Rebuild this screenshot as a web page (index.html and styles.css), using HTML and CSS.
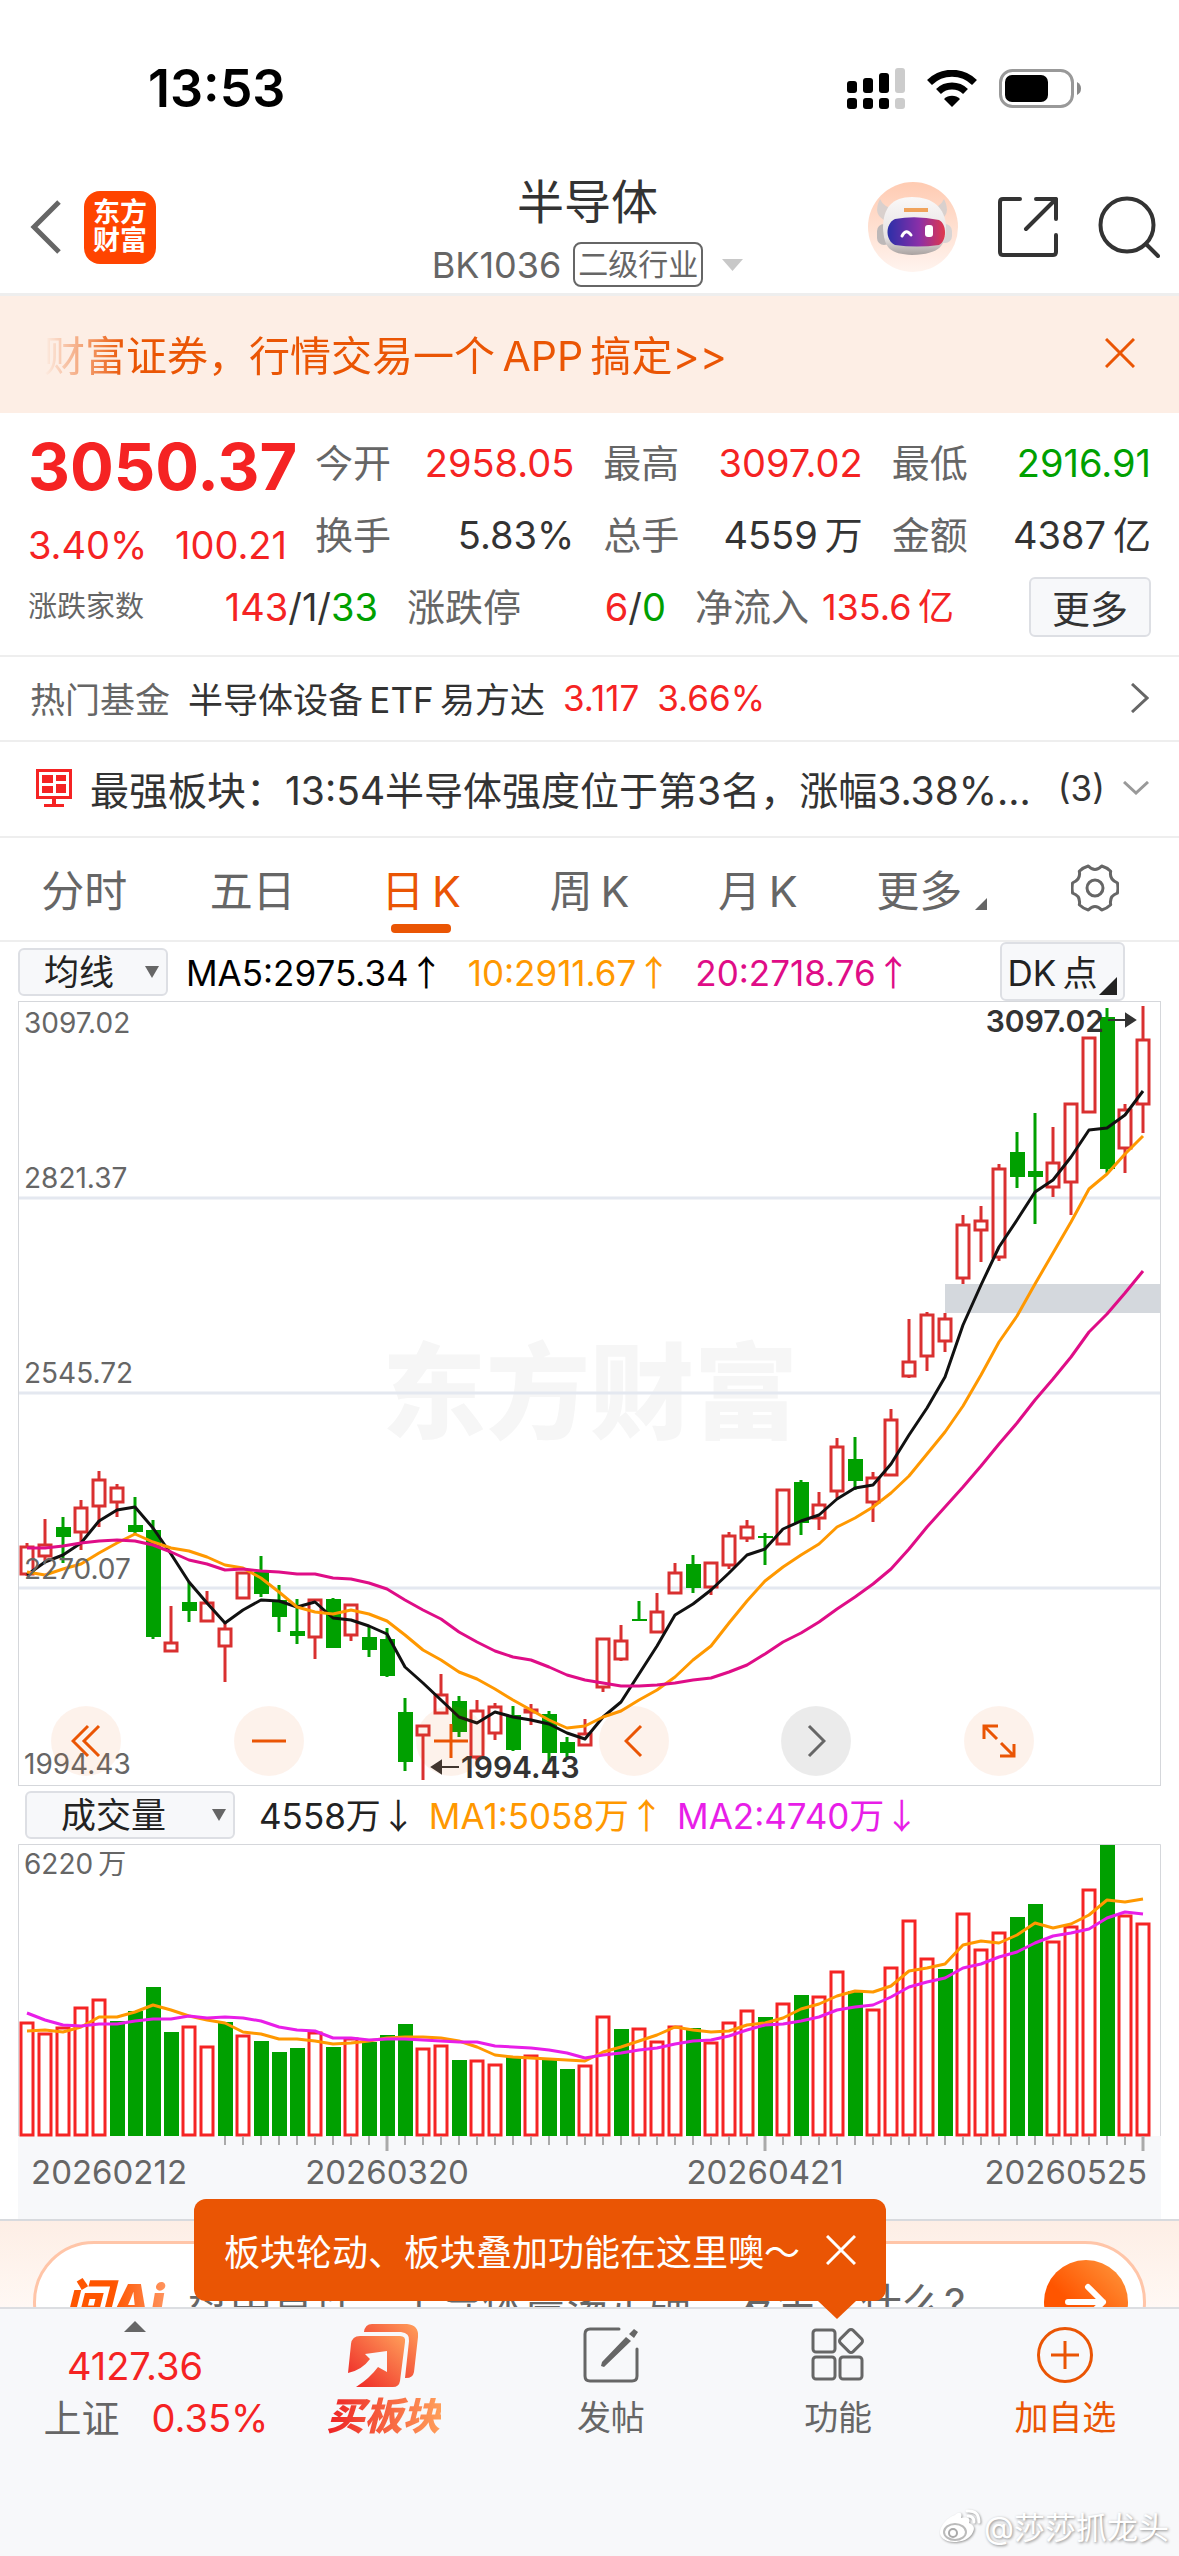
FILE: index.html
```html
<!DOCTYPE html>
<html lang="zh-CN">
<head>
    <meta charset="UTF-8">
    <meta name="viewport" content="width=device-width, initial-scale=1.0">
    <title>半导体 BK1036</title>
    <link rel="stylesheet" href="styles.css">
</head>
<body>
    <div class="status-bar">
        <span class="time">13:53</span>
        <div class="status-icons">
            <svg width="58" height="41" viewBox="0 0 58 41">
                <rect x="0" y="13" width="10" height="12" rx="3"/>
                <rect x="16" y="10" width="10" height="15" rx="3"/>
                <rect x="32" y="5" width="10" height="20" rx="3"/>
                <rect x="48" y="0" width="10" height="25" rx="3" fill="#ccc"/>
                <rect x="0" y="30" width="10" height="11" rx="3"/>
                <rect x="16" y="30" width="10" height="11" rx="3"/>
                <rect x="32" y="30" width="10" height="11" rx="3"/>
                <rect x="48" y="30" width="10" height="11" rx="3" fill="#ccc"/>
            </svg>
            <svg width="50" height="37" viewBox="0 0 50 37">
                <path d="M2.5 12.500a32 32 0 0 1 45 0" fill="none" stroke="#000" stroke-width="7"/>
                <path d="M11.500 21.500a19.500 19.500 0 0 1 27 0" fill="none" stroke="#000" stroke-width="7"/>
                <path d="M25 37l-8-8a11.500 11.500 0 0 1 16 0z"/>
            </svg>
            <svg width="83" height="39" viewBox="0 0 83 39">
                <rect x="1.5" y="1.5" width="72" height="36" rx="12" fill="none" stroke="#999" stroke-width="3"/>
                <rect x="6" y="6" width="43" height="27" rx="7"/>
                <path d="M78 13q4 2 4 6.500t-4 6.500z" fill="#888"/>
            </svg>
        </div>
    </div>

    <header class="header">
        <div class="header-side header-left">
            <button class="icon-btn" aria-label="返回">
                <svg width="32" height="54" viewBox="0 0 32 54" fill="none" stroke="#666" stroke-width="5"><path d="M29 2L4 27l25 25"/></svg>
            </button>
            <div class="logo">东方<br>财富</div>
        </div>
        <div class="header-title">
            <h1>半导体</h1>
            <div class="header-sub">
                <span>BK1036</span>
                <span class="tag">二级行业</span>
                <svg width="21" height="12" viewBox="0 0 21 12"><path d="M0 0h21L10.500 12z" fill="#c8c8c8"/></svg>
            </div>
        </div>
        <div class="header-side header-right">
            <button class="icon-btn" aria-label="智能助手">
                <svg width="90" height="90" viewBox="0 0 90 90">
                    <defs>
                        <linearGradient id="robotBg" x1="0" y1="0" x2="0" y2="1"><stop offset="0" stop-color="#ffcbb2"/><stop offset="1" stop-color="#fff4ef"/></linearGradient>
                        <linearGradient id="visor"><stop offset="0" stop-color="#2b2fa8"/><stop offset=".55" stop-color="#8a2fa8"/><stop offset="1" stop-color="#e0384c"/></linearGradient>
                        <linearGradient id="helmet" x1="0" y1="0" x2="0" y2="1"><stop offset="0" stop-color="#faf8f8"/><stop offset=".7" stop-color="#e6e2e2"/><stop offset="1" stop-color="#a9a2a0"/></linearGradient>
                    </defs>
                    <circle cx="45" cy="45" r="45" fill="url(#robotBg)"/>
                    <path d="M12 17q-8 16 6 22l8-13q-10 0-14-9zM76 17q8 16-6 22l-8-13q10 0 14-9z" fill="#d9d0cd"/>
                    <rect x="9" y="42" width="14" height="21" rx="7" fill="#bdb8b8"/>
                    <rect x="69" y="42" width="15" height="19" rx="7" fill="#d8d4d4"/>
                    <path d="M44 15c21 0 33 11 34 29 0 20-6 28-34 29-22-1-28-7-29-27 0-20 9-31 29-31z" fill="url(#helmet)"/>
                    <path d="M36 28h24" stroke="#f0a35c" stroke-width="4"/>
                    <path d="M27 37q21-4 44 1c8 4 8 21 0 25q-22 3-44 0c-10-5-10-21 0-26z" fill="url(#visor)"/>
                    <path d="M34 54q4-8 9-1" fill="none" stroke="#fff" stroke-width="3" stroke-linecap="round"/>
                    <rect x="57" y="43" width="8" height="12" rx="3" fill="#fff"/>
                </svg>
            </button>
            <button class="icon-btn" aria-label="分享">
                <svg width="60" height="60" viewBox="0 0 60 60" fill="none" stroke="#333" stroke-width="4" stroke-linecap="round" stroke-linejoin="round">
                    <path d="M22 2H5q-3 0-3 3v50q0 3 3 3h50q3 0 3-3V38M38 2h20v20M58 2L28 32"/>
                </svg>
            </button>
            <button class="icon-btn" aria-label="搜索">
                <svg width="62" height="62" viewBox="0 0 62 62" fill="none" stroke="#333" stroke-width="4" stroke-linecap="round">
                    <circle cx="29" cy="29" r="26.500"/><path d="M48 48l12 12"/>
                </svg>
            </button>
        </div>
    </header>

    <div class="banner">
        <a href="#" class="banner-text">财富证券，行情交易一个&thinsp;APP&thinsp;搞定&gt;&gt;</a>
        <button class="icon-btn" aria-label="关闭广告">
            <svg width="30" height="30" viewBox="0 0 30 30" fill="none" stroke="#ea5504" stroke-width="3"><path d="M1 1l28 28M29 1L1 29"/></svg>
        </button>
    </div>

    <section class="quote">
        <div class="quote-top">
            <div class="quote-price">
                <div class="price">3050.37</div>
                <div class="change"><span>3.40%</span><span>100.21</span></div>
            </div>
            <div class="quote-grid">
                <div class="pair"><span class="label">今开</span><span class="red">2958.05</span></div>
                <div class="pair"><span class="label">最高</span><span class="red">3097.02</span></div>
                <div class="pair"><span class="label">最低</span><span class="green">2916.91</span></div>
                <div class="pair"><span class="label">换手</span><span>5.83%</span></div>
                <div class="pair"><span class="label">总手</span><span>4559&thinsp;万</span></div>
                <div class="pair"><span class="label">金额</span><span>4387&thinsp;亿</span></div>
            </div>
        </div>
        <div class="quote-bottom">
            <div class="pair"><span class="label small">涨跌家数</span><span><b class="red">143</b>/1/<b class="green">33</b></span></div>
            <div class="pair"><span class="label">涨跌停</span><span><b class="red">6</b>/<b class="green">0</b></span></div>
            <div class="pair"><span class="label">净流入</span><span class="red inflow">135.6&thinsp;亿</span></div>
            <button class="more-btn">更多</button>
        </div>
    </section>

    <a href="#" class="fund-row">
        <span class="label">热门基金</span>
        <span class="fund-name">半导体设备&thinsp;ETF&thinsp;易方达</span>
        <span class="red">3.117</span>
        <span class="red">3.66%</span>
        <svg class="push" width="18" height="30" viewBox="0 0 18 30" fill="none" stroke="#666" stroke-width="3"><path d="M1 1l15 14L1 29"/></svg>
    </a>

    <div class="board-row">
        <svg width="36" height="38" viewBox="0 0 36 38" fill="#f52323">
            <path d="M1.500 1.500h33v27h-33z" fill="none" stroke="#f52323" stroke-width="3"/>
            <path d="M6 6h11v8H6zM20 6h10v6H20zM6 17h11v7H6zM20 15h10v9H20zM16 29h4v6h-4zM8 35h20v3H8z"/>
        </svg>
        <span class="board-text">最强板块：13:54半导体强度位于第3名，涨幅3.38%...</span>
        <span class="board-count">(3)</span>
        <svg width="26" height="14" viewBox="0 0 26 14" fill="none" stroke="#999" stroke-width="3"><path d="M1 1l12 11L25 1"/></svg>
    </div>

    <nav class="tabs">
        <button class="tab">分时</button>
        <button class="tab">五日</button>
        <button class="tab active">日&thinsp;K</button>
        <button class="tab">周&thinsp;K</button>
        <button class="tab">月&thinsp;K</button>
        <button class="tab tab-more">更多<svg class="corner" width="12" height="12" viewBox="0 0 12 12"><path d="M12 0v12H0z" fill="#666"/></svg></button>
        <button class="tab" aria-label="设置">
            <svg width="48" height="48" viewBox="0 0 48 48" fill="none" stroke="#666" stroke-width="3" stroke-linejoin="round">
                <path d="M46.400 18.800Q47.500 24 46.400 29.200Q38 32 39.700 40.800Q36 44.500 30.700 46Q24 39 17.300 46Q12 44.500 8.300 40.800Q10 32 1.600 29.200Q.5 24 1.600 18.800Q10 16 8.300 7.200Q12 3.500 17.300 2Q24 9 30.700 2Q36 3.500 39.700 7.200Q38 16 46.400 18.800z"/>
                <circle cx="24" cy="24" r="8"/>
            </svg>
        </button>
    </nav>

    <div class="indicator-row">
        <div class="select-box ma-select">
            <select aria-label="主图指标"><option>均线</option><option>BOLL</option></select>
        </div>
        <span class="ma5">MA5:2975.34<i>↑</i></span>
        <span class="ma10">10:2911.67<i>↑</i></span>
        <span class="ma20">20:2718.76<i>↑</i></span>
        <button class="dk-btn">DK&thinsp;点<svg width="18" height="18" viewBox="0 0 18 18"><path d="M18 0v18H0z" fill="#222"/></svg></button>
    </div>

    <div class="chart-wrap">
        <svg id="kline" class="chart" viewBox="0 0 1143 785"></svg>
        <div class="chart-tools">
            <button aria-label="最左"><svg width="30" height="34" viewBox="0 0 30 34"><path d="M17 2L2 17l15 15M28 2L13 17l15 15"/></svg></button>
            <button aria-label="缩小"><svg width="34" height="34" viewBox="0 0 34 34"><path d="M0 17h34"/></svg></button>
            <button aria-label="放大"><svg width="34" height="34" viewBox="0 0 34 34"><path d="M0 17h34M17 0v34"/></svg></button>
            <button aria-label="左移"><svg width="20" height="34" viewBox="0 0 20 34"><path d="M17 2L2 17l15 15"/></svg></button>
            <button aria-label="右移" class="disabled"><svg width="20" height="34" viewBox="0 0 20 34"><path d="M3 2l15 15L3 32"/></svg></button>
            <button aria-label="全屏"><svg width="36" height="36" viewBox="0 0 36 36"><path d="M3 16V3h14M3 3l13 13M33 21v12H19M33 33L20 20"/></svg></button>
        </div>
    </div>

    <div class="indicator-row volume-row">
        <div class="select-box vol-select">
            <select aria-label="副图指标"><option>成交量</option><option>MACD</option></select>
        </div>
        <span class="vol">4558万<i>↓</i></span>
        <span class="ma10">MA1:5058万<i>↑</i></span>
        <span class="vol-ma2">MA2:4740万<i>↓</i></span>
    </div>

    <div class="volume-wrap">
        <svg id="volume" class="chart" viewBox="0 0 1143 375"></svg>
    </div>

    <div class="ai-strip">
        <div class="ai-pill">
            <span class="ai-logo">问Ai</span>
            <span class="ai-text">盘中直连：半导体震荡走强，发生了什么?</span>
            <button class="ai-go" aria-label="提问">
                <svg width="42" height="38" viewBox="0 0 42 38" fill="none" stroke="#fff" stroke-width="6" stroke-linecap="round" stroke-linejoin="round"><path d="M3 19h35M23 4l15 15-15 15"/></svg>
            </button>
        </div>
    </div>

    <footer class="bottom-bar">
        <div class="tooltip">
            <span>板块轮动、板块叠加功能在这里噢～</span>
            <button class="icon-btn" aria-label="关闭提示">
                <svg width="30" height="30" viewBox="0 0 30 30" fill="none" stroke="#fff" stroke-width="3"><path d="M1 1l28 28M29 1L1 29"/></svg>
            </button>
        </div>
        <button class="index-box">
            <svg width="22" height="11" viewBox="0 0 22 11"><path d="M11 0l11 11H0z" fill="#666"/></svg>
            <span class="red">4127.36</span>
            <span class="index-line"><span>上证</span><span class="red">0.35%</span></span>
        </button>
        <button class="bar-item buy">
            <svg width="72" height="66" viewBox="0 0 72 66">
                <defs>
                    <linearGradient id="buy" x1="0" y1="1" x2="1" y2="0"><stop offset="0" stop-color="#ed2224"/><stop offset="1" stop-color="#ff9f5a"/></linearGradient>
                </defs>
                <path d="M16 9q1-8 8-8h35q12 1 11 13l-4 35q-1 6-8 6h-1l4-37q1-8-8-9z" fill="url(#buy)"/>
                <path d="M12 13h40q6 0 5 6l-5 39q-1 6-7 6H8q14-9 22-20l9 5V28l-22 3 5 5Q14 47 0 50l3-29q1-8 9-8z" fill="url(#buy)"/>
            </svg>
            <span>买板块</span>
        </button>
        <button class="bar-item">
            <svg width="56" height="56" viewBox="0 0 56 56" fill="none" stroke="#666" stroke-width="3">
                <path d="M36 2H7Q2 2 2 7v42q0 5 5 5h42q5 0 5-5V22" stroke-linecap="round"/>
                <path d="M43 10l5 4-27 26-3-1 1-4zM46 7l5-5 4 3-4 6z" fill="#666" stroke="none"/>
            </svg>
            <span>发帖</span>
        </button>
        <button class="bar-item">
            <svg width="56" height="56" viewBox="0 0 56 56" fill="none" stroke="#666" stroke-width="3">
                <rect x="3" y="3" width="22" height="22" rx="3"/>
                <rect x="3" y="30" width="22" height="22" rx="3"/>
                <rect x="30" y="30" width="22" height="22" rx="3"/>
                <rect x="32" y="5" width="18" height="18" rx="3" transform="rotate(45 41 14)"/>
            </svg>
            <span>功能</span>
        </button>
        <button class="bar-item add">
            <svg width="56" height="56" viewBox="0 0 56 56" fill="none" stroke="#ea5504" stroke-width="3">
                <circle cx="28" cy="28" r="26.500"/><path d="M14 28h28M28 14v28"/>
            </svg>
            <span>加自选</span>
        </button>
        <div class="watermark">
            <svg width="42" height="36" viewBox="0 0 42 36">
                <path d="M16 7c4-4 8-2 6 3 6-2 10 0 8 5 5 2 6 5 4 9-3 7-11 10-19 10C6 34 0 29 1 23 2 17 9 9 16 7z" fill="#fff"/>
                <ellipse cx="16" cy="24" rx="11" ry="8" fill="none" stroke="#bbb" stroke-width="2"/>
                <circle cx="14" cy="25" r="4" fill="none" stroke="#aaa" stroke-width="2"/>
                <path d="M29 8q6 0 6 6M28 3q12-1 12 11" fill="none" stroke="#fff" stroke-width="3" stroke-linecap="round"/>
            </svg>
            <span>@莎莎抓龙头</span>
        </div>
    </footer>

    <script src="script.js"></script>
</body>
</html>
```

FILE: styles.css
```css
* {
    box-sizing: border-box;
}
body {
    margin: 0;
    min-height: 100vh;
    display: flex;
    flex-direction: column;
    font-family: Inter, "Noto Sans CJK SC", sans-serif;
    color: #333;
    background: #fff;
}
button, select {
    font-family: inherit;
    color: inherit;
    border: none;
    background: none;
    padding: 0;
    cursor: pointer;
}
a {
    color: inherit;
    text-decoration: none;
}
svg {
    display: block;
    flex: none;
}
.red { color: #f52323; }
.green { color: #00a000; }
.label { color: #666; }
.icon-btn { flex: none; }

/* status bar */
.status-bar {
    height: 174px;
    padding: 2px 97px 0 148px;
    display: flex;
    align-items: center;
    justify-content: space-between;
}
.time {
    font-size: 52px;
    font-weight: 600;
    color: #000;
}
.status-icons {
    display: flex;
    align-items: center;
    gap: 22px;
}

/* header */
.header {
    display: grid;
    grid-template-columns: 1fr auto 1fr;
    padding: 0 19px 6px 15px;
    border-bottom: 3px solid #eee;
}
.header-side {
    height: 106px;
    display: flex;
    align-items: center;
    gap: 22px;
}
.header-left { padding-left: 15px; }
.header-right {
    justify-content: flex-end;
    gap: 40px;
}
.logo {
    width: 72px;
    height: 73px;
    padding: 8px 0;
    border-radius: 16px;
    background: #ff4400;
    color: #fff;
    font-size: 27px;
    font-weight: 700;
    line-height: 28px;
    text-align: center;
}
.header-title {
    text-align: center;
}
.header-title h1 {
    margin: 0 0 12px;
    font-size: 47px;
    font-weight: 400;
    line-height: 56px;
}
.header-sub {
    display: flex;
    align-items: center;
    height: 45px;
    font-size: 36px;
    color: #666;
}
.tag {
    margin: 0 19px 0 12px;
    padding: 0 3px;
    border: 2px solid #666;
    border-radius: 8px;
    font-size: 30px;
    line-height: 41px;
}

/* ad banner */
.banner {
    height: 117px;
    padding: 0 44px 4px;
    display: flex;
    align-items: center;
    justify-content: space-between;
    background: #fdeee5;
}
.banner-text {
    font-size: 41px;
    color: #ea5504;
    mask-image: linear-gradient(to right, transparent, #000 80px);
}

/* quote */
.quote {
    padding: 14px 28px 18px;
    font-size: 38px;
    border-bottom: 2px solid #eee;
}
.quote-top {
    display: flex;
    align-items: flex-start;
    gap: 22px;
    height: 150px;
}
.quote-price {
    width: 265px;
    color: #f52323;
}
.price {
    font-size: 65px;
    font-weight: 700;
    line-height: 80px;
}
.change {
    display: flex;
    justify-content: space-between;
    padding-right: 6px;
    line-height: 76px;
}
.quote-grid {
    flex: 1;
    display: grid;
    grid-template-columns: repeat(3, 1fr);
    column-gap: 29px;
    line-height: 72px;
}
.pair {
    display: flex;
    justify-content: space-between;
    white-space: nowrap;
}
.pair b {
    font-weight: 400;
}
.quote-bottom {
    display: grid;
    grid-template-columns: 350fr 259fr 259fr 168fr;
    gap: 29px;
    align-items: center;
    line-height: 60px;
}
.small { font-size: 29px; }
.inflow { font-size: 36px; }
.more-btn {
    justify-self: end;
    width: 122px;
    height: 60px;
    padding-bottom: 4px;
    border: 2px solid #dddfe4;
    border-radius: 6px;
    background: #f7f8fa;
    font-size: 38px;
}

/* fund and board rows */
.fund-row, .board-row {
    display: flex;
    align-items: center;
    padding: 0 30px 2px;
    border-bottom: 2px solid #eee;
    white-space: nowrap;
}
.fund-row {
    height: 85px;
    gap: 18px;
    font-size: 35px;
}
.push { margin-left: auto; }
.board-row {
    height: 96px;
    padding-left: 36px;
    font-size: 39px;
}
.board-text {
    flex: 1;
    margin-left: 18px;
    overflow: hidden;
}
.board-count {
    margin: 0 18px;
    font-size: 35px;
}

/* period tabs */
.tabs {
    height: 104px;
    display: grid;
    grid-template-columns: repeat(7, 1fr);
    border-bottom: 2px solid #eee;
}
.tab {
    position: relative;
    display: flex;
    align-items: center;
    justify-content: center;
    padding-bottom: 3px;
    font-size: 43px;
    color: #666;
}
.tab.active { color: #ea5504; }
.tab.active::after {
    content: "";
    position: absolute;
    bottom: 7px;
    width: 60px;
    height: 9px;
    border-radius: 4px;
    background: #ea5504;
}
.tab-more { padding-right: 14px; }
.corner {
    position: absolute;
    right: 24px;
    bottom: 30px;
}

/* indicator rows */
.indicator-row {
    height: 59px;
    padding: 0 54px 0 18px;
    display: flex;
    align-items: center;
    font-size: 35px;
    white-space: nowrap;
}
.indicator-row i {
    font-family: "Noto Sans CJK SC", sans-serif;
    font-style: normal;
}
.indicator-row > span {
    margin-right: 24px;
    padding-bottom: 3px;
}
.select-box {
    position: relative;
    height: 48px;
    margin-right: 18px;
}
.select-box::after {
    content: "";
    position: absolute;
    right: 9px;
    top: 18px;
    border: 7px solid transparent;
    border-top: 12px solid #666;
    border-bottom: 0;
    pointer-events: none;
}
.select-box select {
    appearance: none;
    width: 100%;
    height: 100%;
    padding-left: 24px;
    border: 2px solid #dddfe4;
    border-radius: 6px;
    background: #f7f8fa;
    font-size: 35px;
    color: #222;
}
.ma-select { width: 150px; }
.vol-select {
    width: 210px;
    margin-right: 24px;
}
.vol-select select { padding-left: 34px; }
.ma5 { color: #000; }
.ma10 { color: #ff9800; }
.ma20 { color: #df0d87; }
.vol { color: #222; }
.vol-ma2 { color: #e81ee8; }
.dk-btn {
    position: relative;
    width: 125px;
    height: 59px;
    margin-left: auto;
    padding: 0 20px 3px 0;
    border: 2px solid #dddfe4;
    border-radius: 6px;
    background: #f7f8fa;
    font-size: 35px;
    color: #222;
}
.dk-btn svg {
    position: absolute;
    right: 6px;
    bottom: 4px;
}
.volume-row {
    height: 58px;
    padding-left: 25px;
}
.volume-row > span { margin-right: 13px; }

/* charts */
.chart-wrap, .volume-wrap {
    position: relative;
    margin: 0 18px;
}
.chart {
    width: 100%;
    height: auto;
}
.axis {
    font-size: 28px;
    fill: #666;
}
.date {
    font-size: 33px;
    fill: #666;
}
.extreme {
    font-size: 30px;
    font-weight: 600;
    fill: #333;
}
.brand {
    font-size: 104px;
    font-weight: 900;
    fill: #f6f6f6;
}
.chart-tools {
    position: absolute;
    left: 33px;
    right: 127px;
    bottom: 10px;
    display: flex;
    justify-content: space-between;
}
.chart-tools button {
    width: 70px;
    height: 70px;
    display: flex;
    align-items: center;
    justify-content: center;
    border-radius: 50%;
    background: rgba(234, 85, 4, 0.08);
}
.chart-tools svg {
    fill: none;
    stroke: #ea5504;
    stroke-width: 3;
}
.chart-tools .disabled { background: rgba(0, 0, 0, 0.08); }
.chart-tools .disabled svg { stroke: #666; }

/* ask AI strip */
.ai-strip {
    height: 88px;
    padding: 20px 33px 0;
    overflow: hidden;
    border-top: 2px solid #d8dade;
    background: linear-gradient(#fdeee5, #fff8f4);
}
.ai-pill {
    height: 122px;
    padding: 0 15px 0 28px;
    display: flex;
    align-items: center;
    border: 3px solid #ffc5a8;
    border-radius: 61px;
    background: #fff;
}
.ai-logo {
    width: 124px;
    padding-bottom: 8px;
    font-size: 48px;
    font-weight: 900;
    font-style: italic;
    color: transparent;
    background: linear-gradient(to right, #ff5500 40%, #ffa070 90%);
    background-clip: text;
}
.ai-text {
    flex: 1;
    padding-bottom: 4px;
    font-size: 42px;
    color: #666;
    white-space: nowrap;
}
.ai-go {
    width: 84px;
    height: 84px;
    display: flex;
    align-items: center;
    justify-content: center;
    border-radius: 50%;
    background: linear-gradient(45deg, #ff5500 40%, #ff9a40);
}

/* bottom bar */
.bottom-bar {
    position: relative;
    flex: 1;
    min-height: 240px;
    display: grid;
    grid-template-columns: 270px repeat(4, 1fr);
    align-items: start;
    border-top: 2px solid #dcdee2;
    background: #f7f8fa;
}
.index-box {
    display: flex;
    flex-direction: column;
    align-items: center;
    padding-top: 12px;
    font-size: 38px;
    line-height: 52px;
    color: #666;
}
.index-box > .red {
    margin-top: 8px;
}
.index-line {
    display: flex;
    gap: 32px;
    padding-left: 42px;
}
.bar-item {
    display: flex;
    flex-direction: column;
    align-items: center;
    gap: 10px;
    padding-top: 18px;
    font-size: 34px;
    line-height: 50px;
    color: #666;
}
.bar-item.add { color: #ea5504; }
.bar-item.buy {
    padding-top: 14px;
    gap: 2px;
}
.buy span {
    font-size: 38px;
    font-weight: 900;
    font-style: italic;
    color: transparent;
    background: linear-gradient(to right, #ed2224, #ff9f5a);
    background-clip: text;
}
.tooltip {
    position: absolute;
    right: 293px;
    bottom: calc(100% + 8px);
    height: 102px;
    padding: 0 30px;
    display: flex;
    align-items: center;
    gap: 26px;
    border-radius: 12px;
    background: #ea5504;
    color: #fff;
    font-size: 36px;
    white-space: nowrap;
}
.tooltip::after {
    content: "";
    position: absolute;
    right: 30px;
    top: 100%;
    border: 19px solid transparent;
    border-top: 18px solid #ea5504;
    border-bottom: 0;
}
.watermark {
    position: absolute;
    right: 10px;
    bottom: 8px;
    display: flex;
    align-items: center;
    gap: 3px;
    font-size: 31px;
    color: #fff;
    text-shadow: 1px 1px 3px #888;
}
.watermark svg {
    filter: drop-shadow(1px 1px 1px #999);
}
```

FILE: script.js
```javascript
const RED = '#d93030';
const GREEN = '#00a000';
const STEP = 18;

// [up, high, body top, body bottom, low] in chart units
const candles = [
    [1,542,545,574,575],[1,518,543,556,560],[0,516,526,536,562],[1,499,506,532,549],[1,470,478,506,526],
    [1,483,486,502,516],[0,496,524,531,534],[0,519,529,636,638],[1,605,641,651,651],[0,581,601,610,621],
    [1,590,601,621,621],[1,622,627,646,681],[1,571,571,598,598],[0,555,571,593,596],[0,584,599,616,631],
    [0,598,630,635,643],[1,598,598,637,658],[0,597,598,647,647],[1,603,603,635,640],[0,626,636,649,656],
    [0,627,638,675,676],[0,697,711,761,770],[1,724,724,735,779],[1,673,693,713,713],[0,695,700,731,736],
    [1,699,709,757,759],[1,702,705,733,739],[0,705,714,749,750],[1,703,708,712,724],[0,710,713,752,761],
    [0,736,741,752,756],[1,718,732,745,745],[1,637,637,687,691],[1,624,639,659,660],[0,600,618,620,620],
    [1,592,610,632,632],[1,562,571,593,593],[0,554,563,587,592],[1,561,561,587,594],[1,531,534,565,568],
    [1,519,525,538,541],[0,532,535,537,564],[1,488,488,544,544],[0,479,481,522,534],[1,491,503,518,529],
    [1,437,445,491,497],[0,436,458,480,489],[1,471,476,502,521],[1,408,418,475,475],[1,318,360,376,377],
    [1,311,313,356,370],[1,312,317,341,351],[1,214,223,278,283],[1,205,219,230,261],[1,163,167,257,260],
    [0,131,151,176,187],[0,112,170,176,223],[1,126,161,187,196],[1,102,102,182,214],[1,36,36,112,112],
    [0,7,16,168,172],[1,103,108,148,172],[1,5,38,104,132]
];
const ma5 = [574,561,554,542,520,509,506,527,553,581,602,622,609,599,600,606,601,617,619,625,633,666,682,699,716,722,711,716,719,723,732,738,716,701,673,645,614,603,589,572,554,548,528,520,514,498,487,484,463,434,407,376,324,284,246,219,191,179,156,129,127,114,90];
const ma10 = [571,574,568,563,552,542,533,541,547,550,556,564,567,577,591,606,611,613,609,613,620,634,649,659,671,678,688,699,709,719,727,725,716,710,699,689,676,659,645,622,600,580,566,554,543,526,517,506,492,475,453,431,405,374,341,315,283,252,221,188,173,153,135];
const ma20 = [547,547,545,542,540,539,540,544,551,559,563,569,568,570,571,573,573,577,578,582,588,599,609,618,631,641,650,656,659,666,674,679,682,685,685,684,682,679,677,671,664,653,641,632,621,608,596,583,568,548,526,506,486,465,443,422,399,378,356,331,313,292,270];

const volumes = [178,189,183,163,155,177,167,143,188,182,202,178,191,197,208,204,188,203,194,198,191,180,204,201,216,216,220,213,211,215,225,221,172,185,184,197,182,184,198,178,166,173,159,151,152,127,147,165,123,76,114,125,69,105,88,73,60,97,82,45,1,71,79];
const volumeDown = [5,6,7,8,11,13,14,15,17,19,20,21,24,27,29,30,33,37,41,43,46,51,55,56,60];
const volMa1 = [187,186,188,183,173,173,168,161,166,172,176,179,188,190,195,195,197,200,199,197,194,193,193,194,197,203,211,213,214,215,216,217,208,203,197,191,183,186,188,187,181,179,174,165,160,152,147,148,142,127,124,120,101,97,99,91,79,84,80,71,56,58,55];
const volMa2 = [169,176,181,182,180,180,177,175,175,172,174,173,174,177,183,186,187,194,194,196,195,195,196,197,198,198,202,203,204,206,209,214,211,209,206,204,200,197,196,192,186,181,180,177,173,166,163,161,153,143,138,134,124,120,113,108,99,92,89,85,74,68,70];

const xAt = i => 9 + i * STEP;

function line(values, color) {
    const points = values.map((y, i) => `${xAt(i)},${y}`).join(' ');
    return `<polyline points="${points}" fill="none" stroke="${color}" stroke-width="3" stroke-linejoin="round"/>`;
}

function drawKline() {
    let html = '<text class="brand" x="572" y="430" text-anchor="middle">东方财富</text>';
    [197, 392, 587].forEach(y => {
        html += `<path d="M0 ${y}H1143" stroke="#e4e8f0" stroke-width="3"/>`;
    });
    html += '<rect x="927" y="283" width="216" height="29" fill="#d4d8dd"/>';
    candles.forEach(([up, high, top, bottom, low], i) => {
        const x = xAt(i);
        const color = up ? RED : GREEN;
        html += `<path d="M${x} ${high}V${top}M${x} ${bottom}V${low}" stroke="${color}" stroke-width="3"/>`;
        html += up
            ? `<rect x="${x - 6}" y="${top + 1}" width="12" height="${Math.max(bottom - top - 2, 1)}" fill="none" stroke="${color}" stroke-width="3"/>`
            : `<rect x="${x - 7}" y="${top}" width="15" height="${bottom - top}" fill="${color}"/>`;
    });
    html += line(ma5, '#111') + line(ma10, '#ff9800') + line(ma20, '#df0d87');
    [['3097.02', 32], ['2821.37', 187], ['2545.72', 382], ['2270.07', 578], ['1994.43', 773]].forEach(([text, y]) => {
        html += `<text class="axis" x="6" y="${y}">${text}</text>`;
    });
    html += '<text class="extreme" x="1086" y="31" text-anchor="end">3097.02</text>';
    html += '<path d="M1090 19h18v-6l9 6-9 6v-6" fill="#333" stroke="#333" stroke-width="2"/>';
    html += '<text class="extreme" x="443" y="777">1994.43</text>';
    html += '<path d="M441 766h-18v-6l-9 6 9 6v-6" fill="#333" stroke="#333" stroke-width="2"/>';
    html += '<rect x=".5" y=".5" width="1142" height="784" fill="none" stroke="#d5d7db"/>';
    document.getElementById('kline').innerHTML = html;
}

function drawVolume() {
    let html = '<rect y="292" width="1143" height="83" fill="#f7f8fa"/>';
    html += '<path d="M.5 292V.5H1142.500V292" fill="none" stroke="#d5d7db"/>';
    volumes.forEach((y, i) => {
        const x = xAt(i);
        html += volumeDown.includes(i)
            ? `<rect x="${x - 7}" y="${y}" width="15" height="${292 - y}" fill="${GREEN}"/>`
            : `<rect x="${x - 6}" y="${y + 1}" width="12" height="${290 - y}" fill="#fff" stroke="#f52424" stroke-width="3"/>`;
        if (i > 10) {
            const major = i === 20 || i === 41 || i === 62;
            html += `<path d="M${x} 292v${major ? 15 : 9}" stroke="#aaa" stroke-width="${major ? 3 : 2}"/>`;
        }
    });
    html += line(volMa1, '#ff9800') + line(volMa2, '#e81ee8');
    html += '<text class="axis" x="6" y="30">6220\u2009万</text>';
    html += '<text class="date" x="13" y="340">20260212</text>';
    html += '<text class="date" x="369" y="340" text-anchor="middle">20260320</text>';
    html += '<text class="date" x="747" y="340" text-anchor="middle">20260421</text>';
    html += '<text class="date" x="1129" y="340" text-anchor="end">20260525</text>';
    document.getElementById('volume').innerHTML = html;
}

drawKline();
drawVolume();
```
